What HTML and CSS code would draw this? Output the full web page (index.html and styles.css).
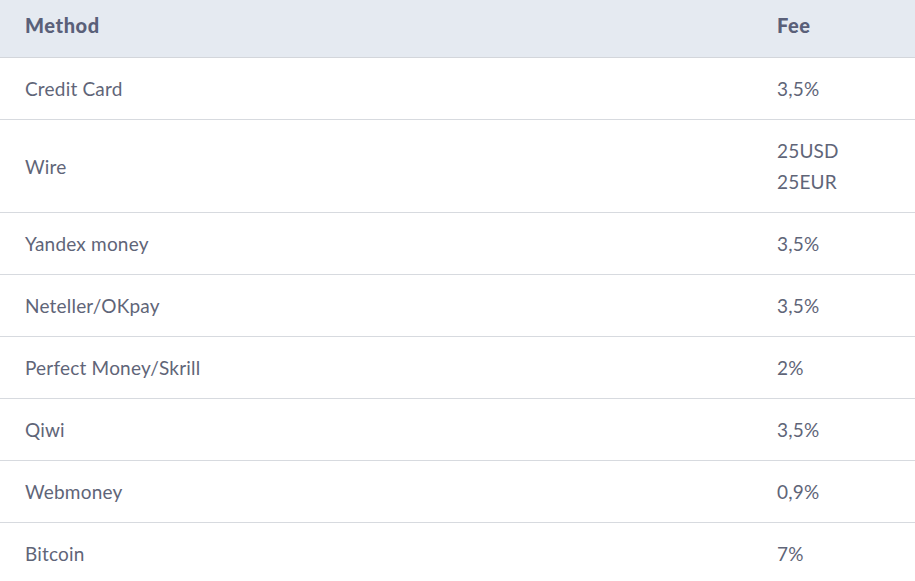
FILE: index.html
```html
<!DOCTYPE html>
<html>
<head>
<meta charset="utf-8">
<link rel="stylesheet" href="styles.css">
</head>
<body>
<table class="fees">
  <thead>
    <tr><th class="method">Method</th><th>Fee</th></tr>
  </thead>
  <tbody>
    <tr><td>Credit Card</td><td>3,5%</td></tr>
    <tr><td>Wire</td><td>25USD<br>25EUR</td></tr>
    <tr><td>Yandex money</td><td>3,5%</td></tr>
    <tr><td>Neteller/OKpay</td><td>3,5%</td></tr>
    <tr><td>Perfect Money/Skrill</td><td>2%</td></tr>
    <tr><td>Qiwi</td><td>3,5%</td></tr>
    <tr><td>Webmoney</td><td>0,9%</td></tr>
    <tr><td>Bitcoin</td><td>7%</td></tr>
  </tbody>
</table>
</body>
</html>
```
FILE: styles.css
```css
html, body {
  margin: 0;
  background: #ffffff;
}
body {
  font-family: "Lato", "Noto Sans", sans-serif;
  color: #5f6578;
}
.fees {
  width: 915px;
  border-collapse: collapse;
}
.fees th {
  background: #e5eaf1;
  text-align: left;
  font-weight: 900;
  font-size: 20px;
  letter-spacing: 0.6px;
  line-height: 31px;
  padding: 10px 25px 16px;
  color: #5a6079;
  border-bottom: 1px solid #d3d6db;
}
.fees th.method {
  width: 702px;
}
.fees td {
  font-size: 19px;
  line-height: 31px;
  padding: 15px 25px;
  border-bottom: 1px solid #d7dadf;
  vertical-align: middle;
  letter-spacing: 0.2px;
}
```
